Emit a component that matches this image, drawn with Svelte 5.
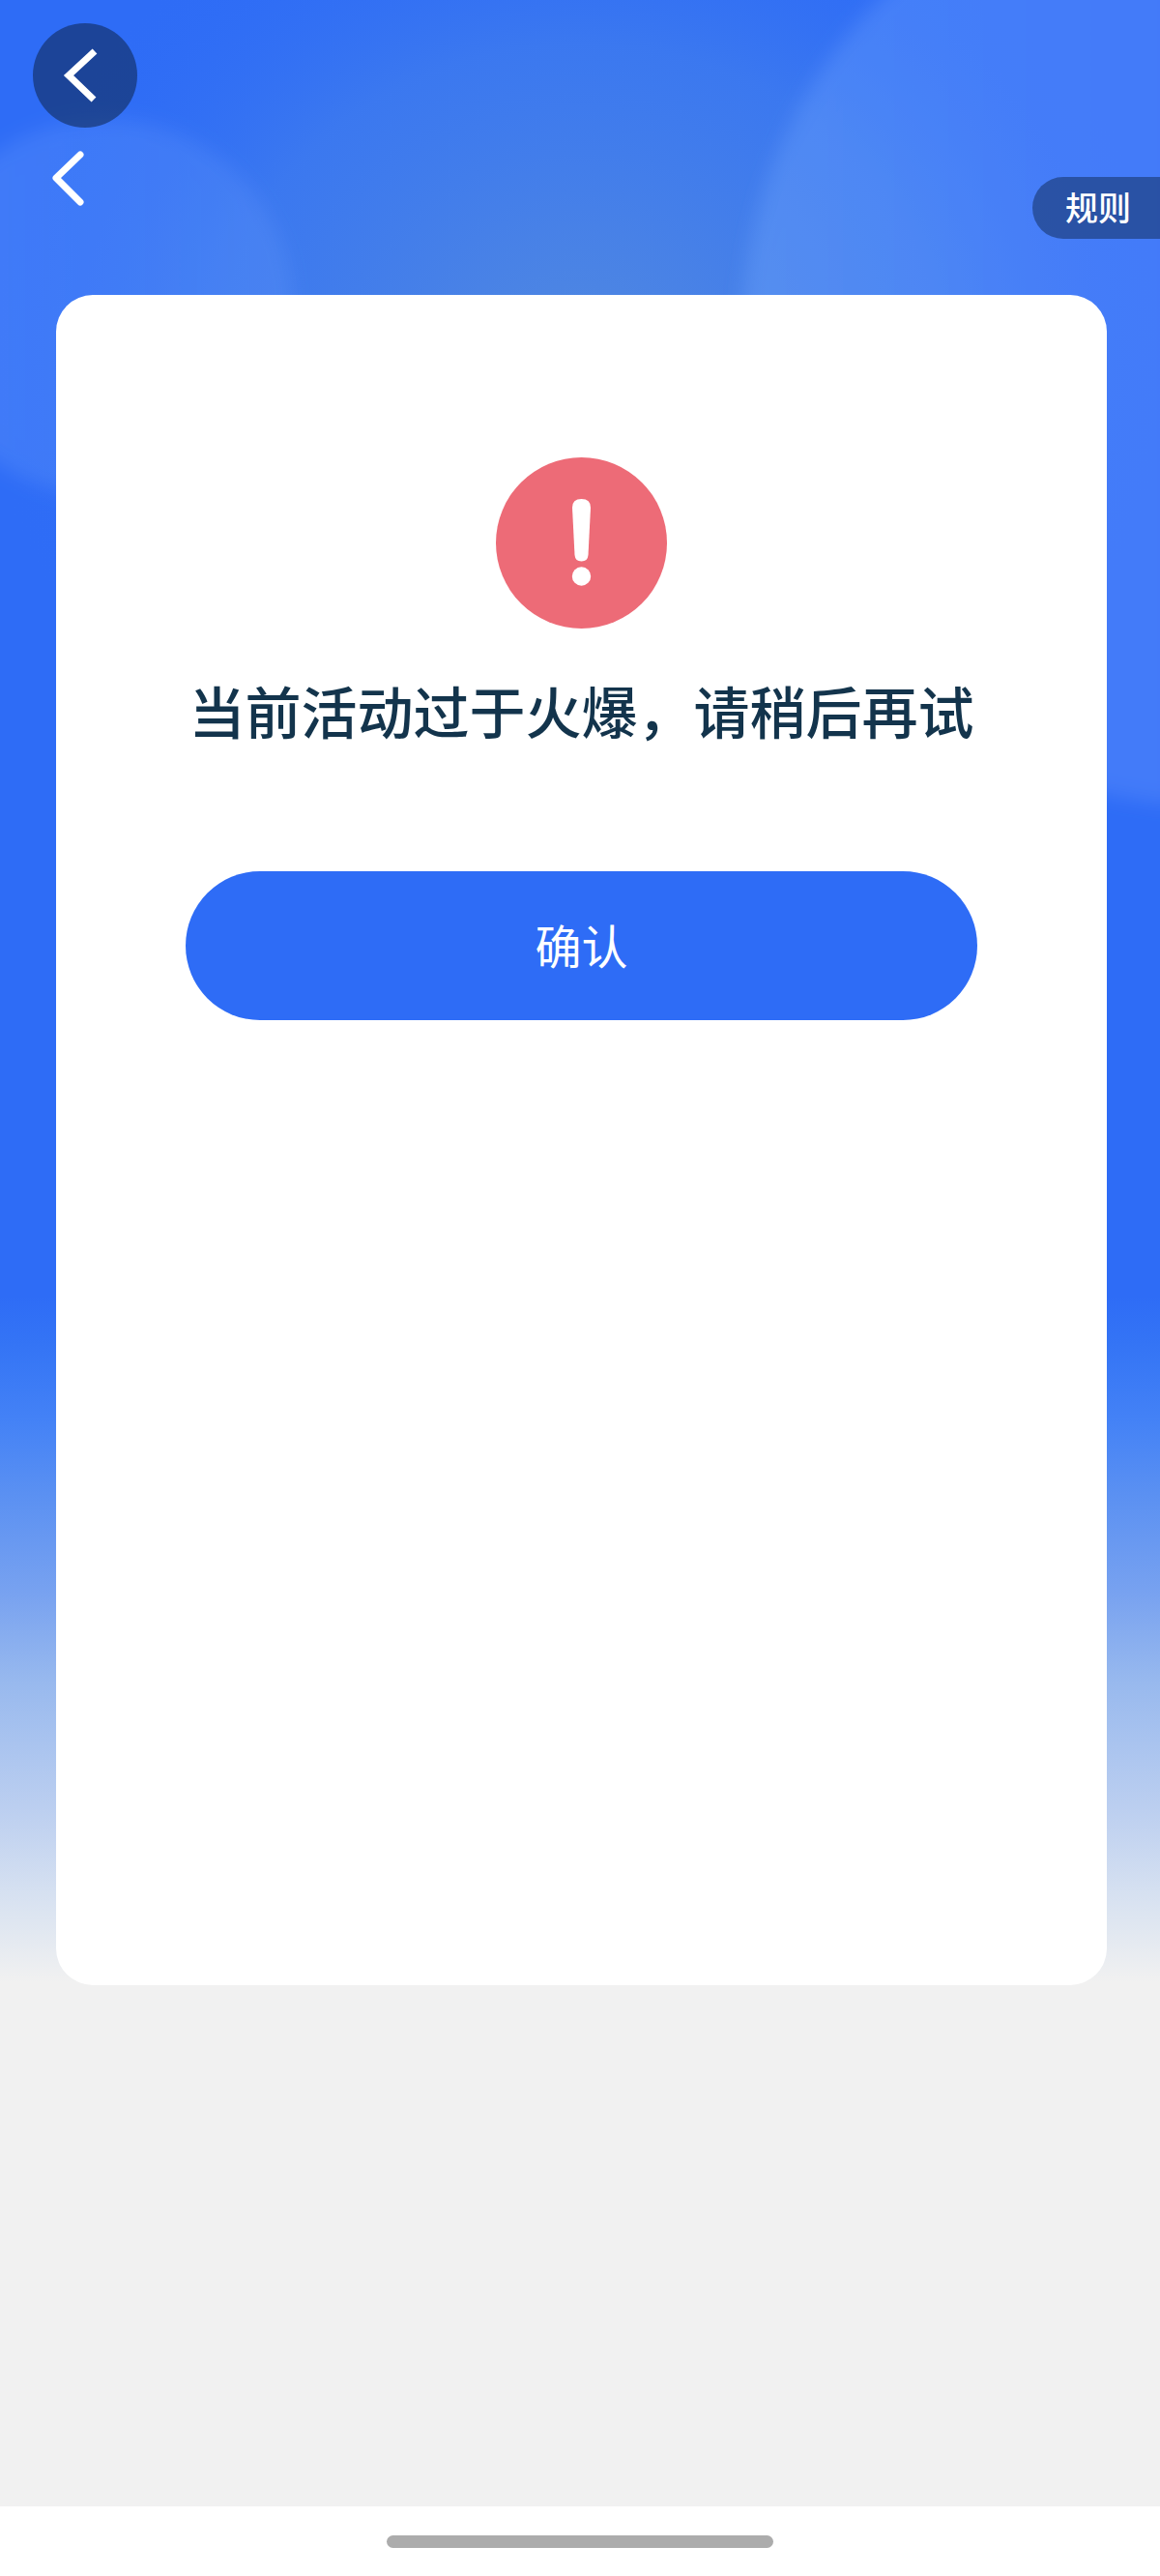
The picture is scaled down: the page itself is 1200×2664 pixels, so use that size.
<script>
  let dismissed = $state(false);
</script>

<div class="page">
  <svg class="scene" aria-hidden="true">
    <defs>
      <radialGradient id="glow">
        <stop offset="0" stop-color="#5088e0" />
        <stop offset="0.25" stop-color="#5088e2" stop-opacity="0.75" />
        <stop offset="0.6" stop-color="#4682ea" stop-opacity="0.55" />
        <stop offset="1" stop-color="#2e6cf6" stop-opacity="0" />
      </radialGradient>
      <linearGradient id="bubbleLeft">
        <stop offset="0" stop-color="#80b0ff" stop-opacity="0.22" />
        <stop offset="1" stop-color="#78a8ff" stop-opacity="0.18" />
      </linearGradient>
      <linearGradient id="bubbleRight">
        <stop offset="0" stop-color="#7cb0ff" stop-opacity="0.3" />
        <stop offset="0.5" stop-color="#7098ff" stop-opacity="0.3" />
      </linearGradient>
      <filter id="soft" x="-10%" y="-10%" width="120%" height="120%">
        <feGaussianBlur stdDeviation="10" />
      </filter>
    </defs>
    <ellipse cx="50%" cy="370" rx="620" ry="540" fill="url(#glow)" />
    <circle cx="108" cy="318" r="195" fill="url(#bubbleLeft)" filter="url(#soft)" />
    <svg x="100%" overflow="visible">
      <circle cx="58" cy="344" r="490" fill="url(#bubbleRight)" filter="url(#soft)" />
    </svg>
  </svg>

  <header>
    <nav>
      <button class="back round" aria-label="返回">
        <svg viewBox="0 0 108 108" width="108" height="108">
          <path d="M64 29 37 54l26 25" fill="none" stroke="#fff" stroke-width="7" />
        </svg>
      </button>
      <button class="back" aria-label="返回上一页">
        <svg viewBox="0 0 108 104" width="108" height="104">
          <path d="M49 28 24 52l25 25" fill="none" stroke="#fff" stroke-width="7" stroke-linecap="round" stroke-linejoin="round" />
        </svg>
      </button>
    </nav>
    <button class="rules">规则</button>
  </header>

  <main>
    <section class="card">
      <svg class="alert" viewBox="0 0 177 177" width="177" height="177" aria-hidden="true">
        <circle cx="88.5" cy="88.5" r="88.5" fill="#ed6b77" />
        <path d="M79 52Q79 43 88.500 43Q98 43 98 52L95.500 101Q95 107.500 88.500 107.500Q82 107.500 81.500 101Z" fill="#fff" />
        <circle cx="88.500" cy="123" r="9.700" fill="#fff" />
      </svg>
      <h1>当前活动过于火爆，请稍后再试</h1>
      <button class="confirm" onclick={() => (dismissed = true)}>确认</button>
    </section>
  </main>

  <footer><span class="handle"></span></footer>
</div>

<style>
  .page {
    position: relative;
    display: flex;
    flex-direction: column;
    min-height: 100vh;
    overflow: hidden;
    font-family: "Noto Sans CJK SC", sans-serif;
    background: linear-gradient(
      #2e6cf6 1340px,
      #3474f5 1390px,
      #4482f6 1470px,
      #5a90f2 1544px,
      #78a2f0 1648px,
      #98b9ee 1740px,
      #bccff0 1872px,
      #dbe4f1 1975px,
      #f1f1f1 2050px
    );
  }
  .scene {
    position: absolute;
    inset: 0;
    width: 100%;
    height: 920px;
  }
  header,
  main,
  footer {
    position: relative;
  }
  button {
    border: 0;
    padding: 0;
    background: none;
    color: #fff;
    font-family: inherit;
    cursor: pointer;
  }
  header {
    display: flex;
    justify-content: space-between;
    align-items: flex-end;
    padding: 24px 0 58px 34px;
  }
  nav {
    display: flex;
    flex-direction: column;
    height: 223px;
  }
  .back {
    display: block;
    width: 108px;
  }
  .back svg {
    display: block;
  }
  .round {
    border-radius: 50%;
    background: rgba(13, 36, 72, 0.54);
  }
  .rules {
    height: 64px;
    padding: 0 30px 2px 34px;
    border-radius: 32px 0 0 32px;
    background: rgba(28, 60, 120, 0.65);
    font-size: 34px;
    font-weight: 500;
    line-height: 62px;
  }
  main {
    flex: 1;
    padding: 0 55px 40px 58px;
  }
  .card {
    display: flex;
    flex-direction: column;
    align-items: center;
    box-sizing: border-box;
    min-height: 1748px;
    padding: 168px 134px;
    border-radius: 38px;
    background: #fff;
  }
  h1 {
    margin: 42px 0 0;
    color: #13344c;
    font-size: 58px;
    font-weight: 500;
    line-height: 84px;
    white-space: nowrap;
  }
  .confirm {
    align-self: stretch;
    height: 154px;
    margin-top: 125px;
    padding-bottom: 4px;
    border-radius: 77px;
    background: #2e6cf6;
    font-size: 48px;
  }
  footer {
    display: flex;
    justify-content: center;
    align-items: center;
    height: 72px;
    background: #fff;
  }
  .handle {
    width: 400px;
    height: 13px;
    border-radius: 7px;
    background: #acacac;
  }
</style>
